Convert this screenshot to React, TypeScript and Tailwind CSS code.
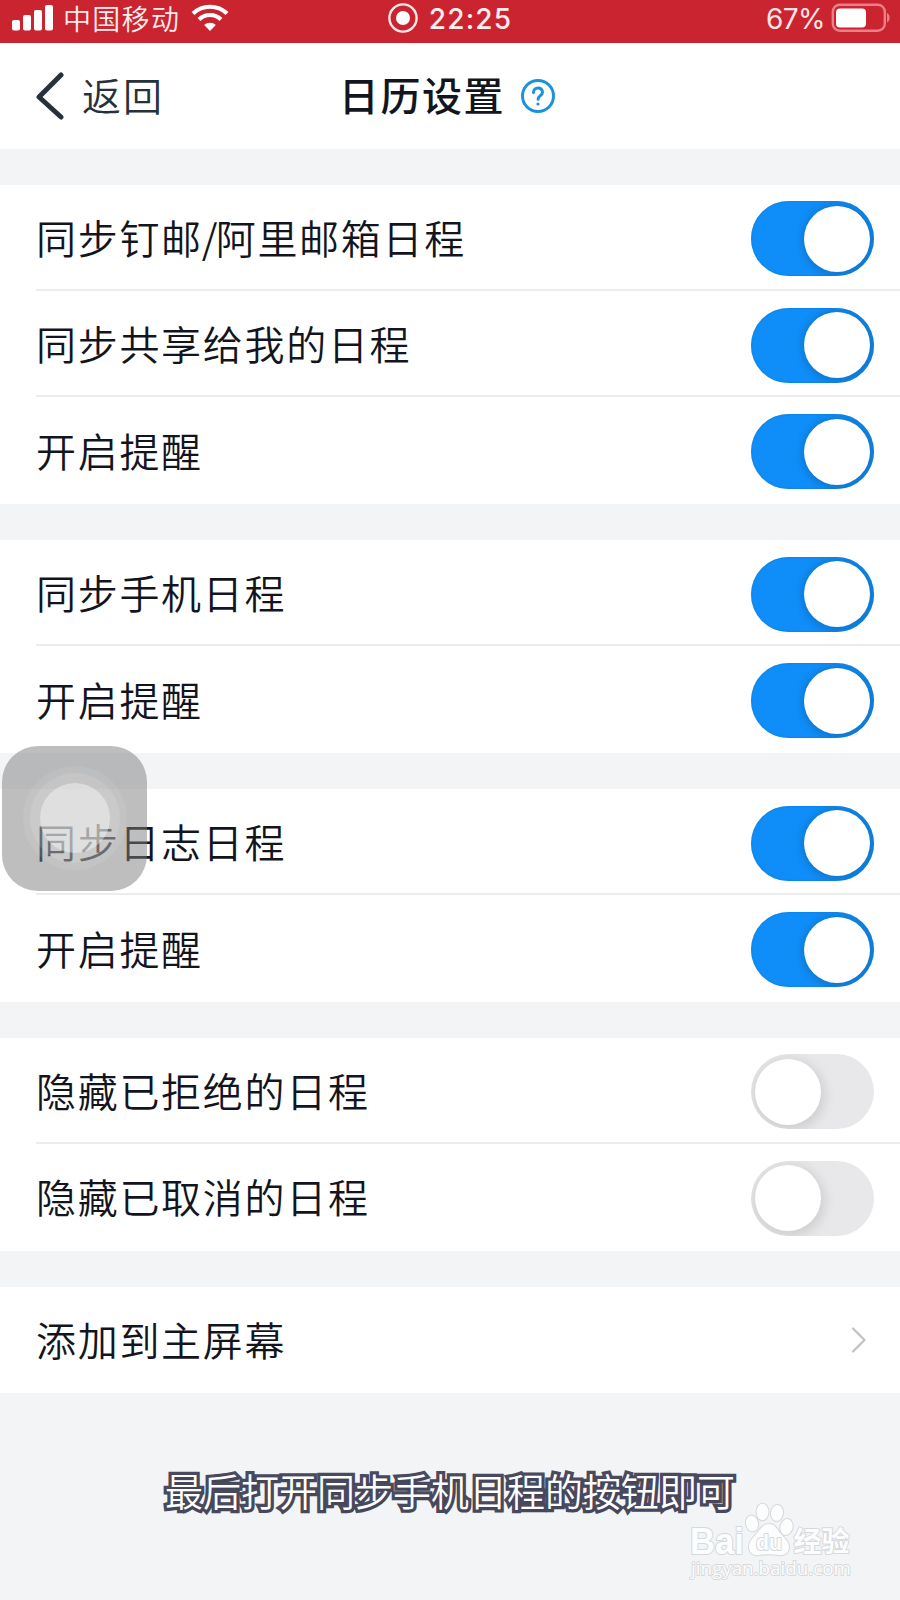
import React from 'react';

const CJK = "font-['Noto_Sans_CJK_SC',sans-serif]";

function Toggle({ on }: { on: boolean }) {
  return (
    <span
      role="switch"
      aria-checked={on}
      className={
        on
          ? 'flex h-[75px] w-[123px] shrink-0 items-center justify-end overflow-hidden rounded-full bg-[#0f8df8] pr-1 shadow-[inset_0_0_2px_#0878cc]'
          : 'flex h-[75px] w-[123px] shrink-0 items-center justify-start overflow-hidden rounded-full bg-[#e8e8ea] pl-1'
      }
    >
      <span
        className={
          on
            ? 'size-[66px] rounded-full bg-white shadow-[1px_1px_6px_3px_rgba(20,80,130,0.35)]'
            : 'size-[66px] rounded-full bg-white shadow-[1px_3px_12px_3px_rgba(0,0,0,0.11)]'
        }
      />
    </span>
  );
}

type Item = { label: React.ReactNode; on?: boolean; link?: boolean };

function Section({ items }: { items: Item[] }) {
  return (
    <section className="mb-[35.8px] bg-white">
      {items.map((item, i) => (
        <div key={i} className="pl-9">
          <div
            className={
              i < items.length - 1
                ? 'flex h-[106.3px] items-center justify-between border-b-2 border-[#ebecee] pr-[26px] pt-[4px]'
                : 'flex h-[106.8px] items-center justify-between pr-[26px] pt-[2px]'
            }
          >
            <span className="-mt-[4px] whitespace-nowrap text-[40px] leading-[60px] tracking-[1.7px]">{item.label}</span>
            {item.link ? (
              <svg width="16" height="28" viewBox="0 0 16 28" className="-mt-[2px] mr-[7px] shrink-0" fill="none" stroke="#c3c4c6" strokeWidth="2.4" strokeLinecap="round" strokeLinejoin="round">
                <path d="M2 2.5 13.5 14 2 25.5" />
              </svg>
            ) : (
              <Toggle on={!!item.on} />
            )}
          </div>
        </div>
      ))}
    </section>
  );
}

function StatusBar() {
  return (
    <div className="grid h-[42.5px] grid-cols-3 items-center bg-[#c9242f] text-white">
      <div className="flex h-[36px] items-center self-start pl-3">
        <svg width="42" height="28" viewBox="0 0 42 28" fill="#fff">
          <rect x="0" y="16" width="8" height="10.5" rx="2" />
          <rect x="11" y="11" width="8" height="15.5" rx="2" />
          <rect x="22" y="6" width="8" height="20.5" rx="2" />
          <rect x="33" y="1" width="8" height="25.5" rx="2" />
        </svg>
        <span className="ml-[9px] whitespace-nowrap text-[28px] leading-[36px] tracking-[1.3px] text-[#ffeced]">中国移动</span>
        <svg width="38" height="28" viewBox="0 0 38 28" className="ml-[11px] shrink-0" fill="none" stroke="#fff" strokeWidth="4.2">
          <path d="M2 9.5C11.5.5 26.5.5 36 9.5" />
          <path d="M8 15.5c6.200-6 15.800-6 22 0" />
          <path d="M19 27l-5.800-6c3.200-3 8.400-3 11.600 0z" fill="#fff" stroke="none" />
        </svg>
      </div>
      <div className="flex h-[36px] items-center justify-center self-start">
        <svg width="30" height="30" viewBox="0 0 30 30">
          <circle cx="15" cy="15" r="13.6" fill="none" stroke="#ffe8e8" strokeWidth="2.4" />
          <circle cx="15" cy="15" r="7" fill="#fff" />
        </svg>
        <span className="ml-[11px] mt-[2px] font-['Inter',sans-serif] text-[28px] font-medium leading-8 tracking-[1.2px] text-[#ffeced]">22:25</span>
      </div>
      <div className="flex h-[36px] items-center justify-end self-start pr-[9px]">
        <span className="mr-[6px] mt-[2px] font-['Inter',sans-serif] text-[28px] font-normal leading-8 tracking-[-0.6px] text-[#ffe4e5]">67%</span>
        <svg width="60" height="30" viewBox="0 0 60 30">
          <rect x="1.8" y="1.7" width="52" height="26" rx="7" fill="none" stroke="#ea8087" strokeWidth="2.4" />
          <rect x="5" y="5.5" width="30" height="19" rx="4" fill="#fff" />
          <path d="M56 10c3.500 1.500 3.500 8 0 9.500z" fill="#ea8087" />
        </svg>
      </div>
    </div>
  );
}

function Watermark() {
  return (
    <svg width="170" height="84" viewBox="0 0 170 84" className="absolute left-[686px] top-[1500px]" fill="#fcfdfd" stroke="#d6d8db" strokeWidth="2" strokeLinejoin="round" paintOrder="stroke">
      <text x="4" y="54" fontFamily="'Liberation Sans', sans-serif" fontWeight="700" fontSize="36" textLength="54" lengthAdjust="spacingAndGlyphs">Bai</text>
      <ellipse cx="66" cy="23.5" rx="6" ry="8" transform="rotate(-12 66 23.5)" />
      <ellipse cx="76.5" cy="12" rx="6" ry="8.2" />
      <ellipse cx="91" cy="13" rx="6" ry="8" transform="rotate(8 91 13)" />
      <ellipse cx="100.5" cy="27" rx="6" ry="8" transform="rotate(14 100.5 27)" />
      <path d="M83 24c-6 0-9 5-12 9-4 5-8 8-8 14 0 6 5 9 10 8 7-1 13-1 20 0 5 1 10-2 10-8s-5-9-9-14c-3-4-5-9-11-9z" />
      <text x="70" y="50" fontFamily="'Liberation Sans', sans-serif" fontWeight="700" fontSize="22" textLength="26" lengthAdjust="spacingAndGlyphs">du</text>
      <text x="107.5" y="52" fontFamily="'Noto Sans CJK SC', sans-serif" fontWeight="700" fontSize="28">经验</text>
      <text x="5" y="75" fontFamily="'Open Sans', sans-serif" fontWeight="400" fontSize="19" textLength="160" lengthAdjust="spacingAndGlyphs" strokeWidth="1.8">jingyan.baidu.com</text>
    </svg>
  );
}

export default function App() {
  return (
    <div className={`${CJK} relative h-[1600px] w-[900px] overflow-hidden bg-[#f2f4f6] text-[#12151d] font-[350]`}>
      <StatusBar />
      <header className="mb-9 grid h-[106.3px] grid-cols-[1fr_auto_1fr] items-center bg-white">
        <div className="flex items-center pl-[35px]">
          <svg width="30" height="48" viewBox="0 0 30 48" fill="none" stroke="#27313b" strokeWidth="5" strokeLinecap="round" strokeLinejoin="round">
            <path d="M26 3 4 25l22 20" />
          </svg>
          <span className="-mt-[3px] ml-[17px] text-[39px] leading-[60px] tracking-[2px] text-[#27313b]">返回</span>
        </div>
        <div className="flex items-center pr-[5px]">
          <h1 className="-mt-[3px] text-[40px] font-medium leading-[60px] tracking-[1.6px]">日历设置</h1>
          <svg width="36" height="36" viewBox="0 0 36 36" className="ml-[15px]" fill="none" stroke="#1c92dc" strokeWidth="3" strokeLinecap="round" strokeLinejoin="round">
            <circle cx="18" cy="18" r="15.5" />
            <path d="M13.500 14.500c0-6 9-6 9-.3 0 3.300-4.400 3.600-4.400 7" />
            <circle cx="18" cy="26" r="1.6" fill="#1c92dc" stroke="none" />
          </svg>
        </div>
        <div />
      </header>
      <main>
        <Section items={[{ label: <>同步钉邮<span className="-ml-[1px] -mr-[3.5px]">/</span>阿里邮箱日程</>, on: true }, { label: '同步共享给我的日程', on: true }, { label: '开启提醒', on: true }]} />
        <Section items={[{ label: '同步手机日程', on: true }, { label: '开启提醒', on: true }]} />
        <Section items={[{ label: '同步日志日程', on: true }, { label: '开启提醒', on: true }]} />
        <Section items={[{ label: '隐藏已拒绝的日程' }, { label: '隐藏已取消的日程' }]} />
        <Section items={[{ label: '添加到主屏幕', link: true }]} />
      </main>

      <div className="absolute left-[2px] top-[746px] flex size-[145px] items-center justify-center rounded-[36px] bg-[#7d7d7d]/50">
        <div className="-mt-[2px] flex size-[104px] items-center justify-center rounded-full bg-white/8">
          <div className="flex size-[90px] items-center justify-center rounded-full bg-white/12">
            <div className="size-[70px] rounded-full bg-white/40" />
          </div>
        </div>
      </div>

      <p className="absolute left-[165px] top-[1462px] whitespace-nowrap text-[38px] leading-[56px] text-white [-webkit-text-stroke:6.5px_#494a5e] [paint-order:stroke_fill] [text-shadow:1px_2px_2px_rgba(60,60,80,0.4)]">
        最后打开同步手机日程的按钮即可
      </p>
      <Watermark />
    </div>
  );
}
